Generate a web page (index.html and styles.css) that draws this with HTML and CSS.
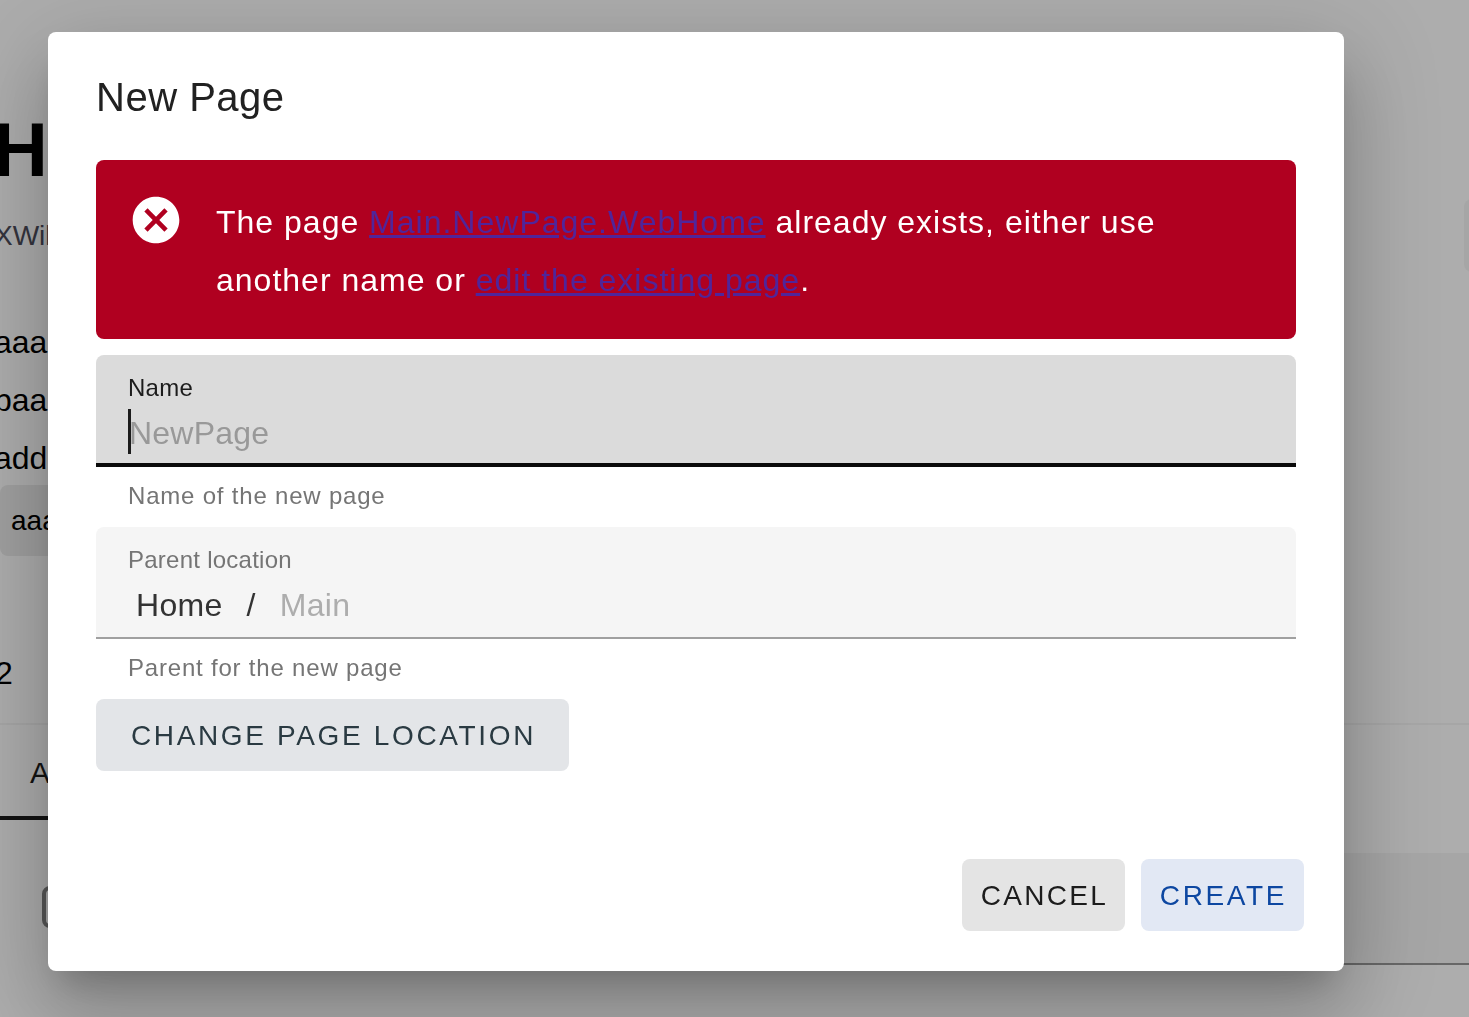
FILE: index.html
```html
<!DOCTYPE html>
<html lang="en">
<head>
<meta charset="utf-8">
<title>New Page</title>
<link rel="stylesheet" href="styles.css">
</head>
<body>
<main class="page">
  <h1 class="page-title">H</h1>
  <p class="page-sub">XWiki</p>
  <p class="page-line">aaa</p>
  <p class="page-line">baa</p>
  <p class="page-line">add</p>
  <div class="page-chip">aaa</div>
  <p class="page-count">2</p>
  <div class="page-tabs"><span class="page-tab">A</span></div>
  <div class="page-row">
    <span class="page-check"></span>
    <span class="page-input"></span>
  </div>
</main>
<span class="page-side"></span>
<div class="backdrop"></div>
<section class="dialog" role="dialog" aria-label="New Page">
  <div class="dialog-body">
    <h2 class="dialog-title">New Page</h2>
    <div class="alert">
      <svg class="alert-icon" viewBox="0 0 24 24" aria-hidden="true"><path fill="#fff" d="M12 2C6.47 2 2 6.47 2 12s4.47 10 10 10 10-4.47 10-10S17.53 2 12 2zm5 13.59L15.59 17 12 13.41 8.41 17 7 15.59 10.59 12 7 8.41 8.41 7 12 10.59 15.59 7 17 8.41 13.41 12 17 15.59z"/></svg>
      <p class="alert-text">The page <a href="#">Main.NewPage.WebHome</a> already exists, either use another name or <a href="#">edit the existing page</a>.</p>
    </div>
    <div class="field field-focus">
      <label class="field-label">Name</label>
      <div class="field-value"><span class="caret"></span><span class="placeholder">NewPage</span></div>
    </div>
    <p class="helper">Name of the new page</p>
    <div class="field field-muted">
      <label class="field-label">Parent location</label>
      <div class="crumbs"><span class="crumb">Home</span><span class="crumb-sep">/</span><span class="crumb-current">Main</span></div>
    </div>
    <p class="helper">Parent for the new page</p>
    <button class="btn btn-location" type="button">CHANGE PAGE LOCATION</button>
  </div>
  <footer class="dialog-actions">
    <button class="btn btn-cancel" type="button">CANCEL</button>
    <button class="btn btn-create" type="button">CREATE</button>
  </footer>
</section>
</body>
</html>
```
FILE: styles.css
```css
* { box-sizing: border-box; }
html, body { margin: 0; height: 1017px; overflow: hidden; background: #fff; }
body { font-family: "Liberation Sans", Arial, sans-serif; color: #000; }
p, h1, h2 { margin: 0; font-weight: 400; }

.page { height: 1017px; display: flex; flex-direction: column; overflow: hidden; }
.page-title { margin: 106px 0 0 -7px; font-size: 76px; line-height: 88px; font-weight: 700; height: 88px; }
.page-sub { margin: 24px 0 0 -6px; font-size: 28px; line-height: 36px; color: #4d4d5c; }
.page-line { margin: 0 0 0 -6px; font-size: 32px; line-height: 58px; }
.page-sub + .page-line { margin-top: 59px; }
.page-chip { margin-top: -2px; width: 300px; height: 71px; padding-left: 11px; background: #ececec; border-radius: 8px; font-size: 28px; line-height: 71px; }
.page-count { margin: 99px 0 0 -5px; font-size: 32px; line-height: 36px; }
.page-tabs { margin-top: 32px; height: 97px; border-top: 2px solid #f5f5f5; }
.page-tab { display: block; width: 200px; height: 95px; padding: 28px 0 0 30px; font-size: 30px; line-height: 40px; border-bottom: 4px solid #1c1c1c; color: #1c1c1c; }
.page-row { display: flex; margin-top: 33px; height: 112px; }
.page-check { margin: 33px 0 0 42px; width: 40px; height: 42px; border: 4px solid #828282; border-radius: 8px; }
.page-input { margin-left: 600px; flex: 1; height: 112px; background: #f5f5f5; border-bottom: 2px solid #999; }
.page-side { position: absolute; left: 1464px; top: 199px; width: 60px; height: 73px; background: #f5f5f5; border-radius: 8px; }

.backdrop { position: fixed; inset: 0; background: rgba(0, 0, 0, .32); }
.dialog { position: fixed; left: 48px; top: 32px; width: 1296px; height: 939px; display: flex; flex-direction: column; background: #fff; border-radius: 8px;
  box-shadow: 0 22px 30px -14px rgba(0,0,0,.2), 0 48px 76px 6px rgba(0,0,0,.14), 0 18px 92px 16px rgba(0,0,0,.12); }
.dialog-body { flex: 1; padding: 40px 48px 0; }
.dialog-title { font-size: 40px; line-height: 50px; letter-spacing: .5px; color: #212121; margin-bottom: 38px; }

.alert { display: flex; height: 179px; padding: 32px 36px; background: #b00020; border-radius: 8px; color: #fff; }
.alert-icon { width: 56px; height: 56px; flex: none; margin-right: 32px; margin-left: -4px; }
.alert-text { flex: 1; font-size: 32px; line-height: 58px; letter-spacing: 1px; margin-top: 1px; }
.alert-text a { color: #50259a; }

.field { margin-top: 16px; height: 112px; padding: 16px 32px 0; border-radius: 8px 8px 0 0; }
.field-focus { background: #dbdbdb; border-bottom: 4px solid #0a0a0a; color: #1c1c1c; }
.field-muted { margin-top: 0; background: #f5f5f5; border-bottom: 2px solid #a0a0a0; color: #757575; }
.field-label { display: block; font-size: 24px; line-height: 34px; letter-spacing: .25px; }
.field-value { display: flex; position: relative; height: 44px; margin-top: 4px; padding-top: 2px; font-size: 32px; line-height: 44px; letter-spacing: .23px; }
.caret { position: absolute; left: 0; top: 0; width: 3px; height: 45px; background: #1c1c1c; }
.placeholder { color: #999; padding-left: 1px; }
.crumbs { display: flex; margin-top: 6px; padding-left: 8px; font-size: 32px; line-height: 44px; letter-spacing: .3px; color: #333; }
.crumb-sep { margin: 0 24px; }
.crumb-current { color: #adadad; }
.helper { height: 60px; padding: 15px 32px 0; font-size: 24px; line-height: 28px; letter-spacing: .8px; color: #757575; }

.btn { height: 72px; padding: 2px 0 0 2px; border: 0; border-radius: 8px; font-family: inherit; font-size: 28px; letter-spacing: 2.65px; }
.btn-location { display: block; width: 473px; background: #e3e5e8; color: #2a3a42; }
.dialog-actions { display: flex; justify-content: flex-end; gap: 16px; padding: 0 40px 40px 0; }
.btn-cancel, .btn-create { width: 163px; }
.btn-cancel { background: #e4e4e4; color: #1c1c1c; letter-spacing: 2.3px; }
.btn-create { background: #e2e8f4; color: #0d47a1; }
```
